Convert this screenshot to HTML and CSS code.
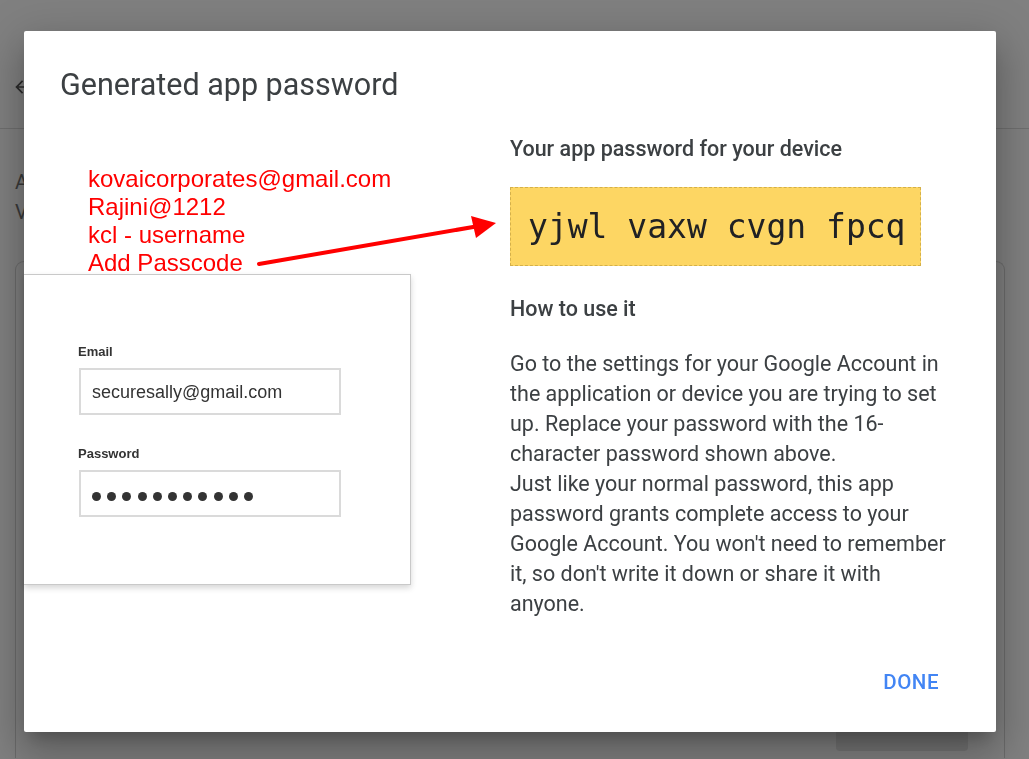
FILE: index.html
```html
<!DOCTYPE html>
<html lang="en">
<head>
<meta charset="utf-8">
<title>Generated app password</title>
<link rel="stylesheet" href="styles.css">
</head>
<body>
<div class="page">
  <header class="page-header">
    <svg class="back" width="20" height="20" viewBox="0 0 24 24"><path d="M20 11H7.83l5.59-5.59L12 4l-8 8 8 8 1.41-1.41L7.83 13H20v-2z" fill="currentColor"/></svg>
  </header>
  <main class="page-main">
    <p class="page-text">Apps</p>
    <p class="page-text">View</p>
    <section class="page-card">
      <div class="page-card-foot"><span class="page-btn"></span></div>
    </section>
  </main>
</div>

<div class="scrim">
  <div class="dialog" role="dialog">
    <h1 class="dialog-title">Generated app password</h1>
    <div class="dialog-body">
      <div class="col-left">
        <div class="notes">
          <div>kovaicorporates@gmail.com</div>
          <div>Rajini@1212</div>
          <div>kcl - username</div>
          <div>Add Passcode</div>
        </div>
        <div class="login-card">
          <div class="field-label">Email</div>
          <div class="field-input">securesally@gmail.com</div>
          <div class="field-label second">Password</div>
          <div class="field-input dots">
            <span class="dot"></span><span class="dot"></span><span class="dot"></span><span class="dot"></span><span class="dot"></span><span class="dot"></span><span class="dot"></span><span class="dot"></span><span class="dot"></span><span class="dot"></span><span class="dot"></span>
          </div>
        </div>
      </div>
      <div class="col-right">
        <h2 class="sub">Your app password for your device</h2>
        <div class="pass-box">yjwl vaxw cvgn fpcq</div>
        <h2 class="sub how">How to use it</h2>
        <p class="para">Go to the settings for your Google Account in the application or device you are trying to set up. Replace your password with the 16-character password shown above.<br>Just like your normal password, this app password grants complete access to your Google Account. You won't need to remember it, so don't write it down or share it with anyone.</p>
      </div>
    </div>
    <div class="dialog-foot">
      <button class="done">DONE</button>
    </div>
    <svg class="arrow" width="260" height="60" viewBox="0 0 260 60">
      <line x1="2" y1="55" x2="222" y2="17" stroke="#ff0000" stroke-width="4" stroke-linecap="round"/>
      <polygon points="239,14 214,7 219,29" fill="#ff0000"/>
    </svg>
  </div>
</div>
</body>
</html>
```
FILE: styles.css
```css
* { box-sizing: border-box; }
html, body { margin: 0; padding: 0; }
body {
  width: 1029px;
  height: 759px;
  overflow: hidden;
  background: #808080;
  font-family: Roboto, "Liberation Sans", Arial, sans-serif;
}

/* background page (under the scrim) */
.page { height: 759px; overflow: hidden; }
.page-header {
  height: 129px;
  border-bottom: 1px solid #6f6f6f;
  padding: 77px 0 0 12px;
  color: #2b2b2b;
}
.back { display: block; }
.page-main { padding: 38px 24px 0 15px; }
.page-text {
  margin: 0;
  font-size: 20px;
  line-height: 30px;
  color: #3a3a3a;
  white-space: nowrap;
}
.page-card {
  margin-top: 34px;
  height: 497px;
  width: 990px;
  border: 1px solid #6b6b6b;
  border-bottom: none;
  border-radius: 9px 9px 0 0;
}
.page-card-foot {
  padding-top: 453px;
  display: flex;
  justify-content: flex-end;
  padding-right: 36px;
}
.page-btn {
  width: 132px;
  height: 36px;
  border-radius: 4px;
  background: #747474;
}

/* dialog */
.scrim {
  position: fixed;
  inset: 0;
  padding: 31px 0 0 24px;
}
.dialog {
  position: relative;
  width: 972px;
  height: 701px;
  background: #fff;
  border-radius: 2px;
  display: flex;
  flex-direction: column;
  box-shadow: 0 11px 15px -7px rgba(0,0,0,.22), 0 24px 38px 3px rgba(0,0,0,.16), 0 9px 46px 8px rgba(0,0,0,.14);
}
.dialog-title {
  margin: 0;
  padding: 36px 0 0 36px;
  font-size: 30.5px;
  line-height: 36px;
  font-weight: 400;
  color: #3c4043;
}
.dialog-body {
  margin-top: 34px;
  display: grid;
  grid-template-columns: 486px 450px;
}

.col-left { padding-top: 28px; }
.notes {
  padding-left: 64px;
  font-family: "Liberation Sans", Arial, sans-serif;
  font-size: 24px;
  line-height: 28px;
  color: #ff0000;
}
.login-card {
  margin-top: -3px;
  width: 387px;
  height: 311px;
  background: #fff;
  border: 1px solid #c9c9c9;
  border-left: none;
  box-shadow: 0 3px 6px rgba(0,0,0,.16);
  padding: 69px 0 0 54px;
  font-family: "Liberation Sans", Arial, sans-serif;
}
.field-label {
  font-size: 13px;
  line-height: 16px;
  font-weight: 700;
  color: #333;
}
.field-label.second { margin-top: 31px; }
.field-input {
  margin-top: 8px;
  margin-left: 1px;
  width: 262px;
  height: 47px;
  border: 2px solid #dadada;
  padding: 2px 0 0 11px;
  display: flex;
  align-items: center;
  font-size: 18px;
  color: #333;
}
.dots { gap: 6.2px; padding-top: 6px; }
.dot {
  width: 9px;
  height: 9px;
  border-radius: 50%;
  background: #333;
}

.sub {
  margin: 0;
  font-size: 21.5px;
  line-height: 24px;
  font-weight: 500;
  color: #3c4043;
}
.sub.how { margin-top: 31px; }
.pass-box {
  margin-top: 26px;
  width: 411px;
  height: 79px;
  background: #fdd663;
  border: 1px dashed #d4b04a;
  display: flex;
  align-items: center;
  padding-left: 17px;
  font-family: "DejaVu Sans Mono", "Liberation Mono", monospace;
  font-size: 33px;
  color: #202124;
}
.para {
  margin: 28px 0 0;
  font-size: 21.5px;
  line-height: 30px;
  color: #3c4043;
}

.dialog-foot {
  margin-top: auto;
  padding: 0 41px 32px 0;
  display: flex;
  justify-content: flex-end;
}
.done {
  border: none;
  background: none;
  padding: 0 16px;
  height: 36px;
  font-family: Roboto, sans-serif;
  font-size: 20.5px;
  font-weight: 500;
  letter-spacing: 0.5px;
  color: #4285f4;
}

.arrow {
  position: absolute;
  left: 233px;
  top: 178px;
}
```
